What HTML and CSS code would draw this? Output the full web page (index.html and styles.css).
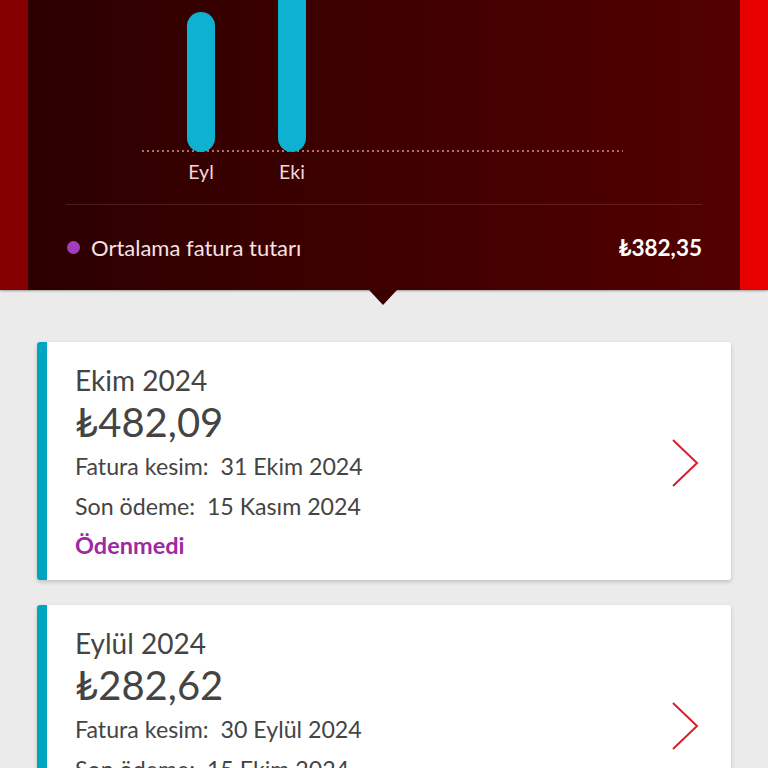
FILE: index.html
```html
<!DOCTYPE html>
<html lang="tr">
<head>
<meta charset="utf-8">
<link rel="stylesheet" href="styles.css">
</head>
<body>
<header class="header">
  <div class="strip strip-left"></div>
  <div class="panel">
    <div class="chart">
      <div class="plot">
        <div class="bar" style="height:140px"></div>
        <div class="bar" style="height:200px"></div>
      </div>
      <div class="labels">
        <span class="label">Eyl</span>
        <span class="label">Eki</span>
      </div>
    </div>
    <div class="summary">
      <span class="dot"></span>
      <span class="summary-text">Ortalama fatura tutarı</span>
      <span class="summary-value">₺382,35</span>
    </div>
  </div>
  <div class="strip strip-right"></div>
</header>

<main class="list">
  <article class="card">
    <div class="card-body">
      <div class="card-title">Ekim 2024</div>
      <div class="card-amount">₺482,09</div>
      <div class="card-line">Fatura kesim:&nbsp; 31 Ekim 2024</div>
      <div class="card-line">Son ödeme:&nbsp; 15 Kasım 2024</div>
      <div class="card-status">Ödenmedi</div>
    </div>
    <svg class="chev" width="28" height="50" viewBox="0 0 28 50"><polyline points="2,2 26,25 2,48" fill="none" stroke="#d5202e" stroke-width="2"/></svg>
  </article>
  <article class="card">
    <div class="card-body">
      <div class="card-title">Eylül 2024</div>
      <div class="card-amount">₺282,62</div>
      <div class="card-line">Fatura kesim:&nbsp; 30 Eylül 2024</div>
      <div class="card-line">Son ödeme:&nbsp; 15 Ekim 2024</div>
      <div class="card-status">Ödendi</div>
    </div>
    <svg class="chev" width="28" height="50" viewBox="0 0 28 50"><polyline points="2,2 26,25 2,48" fill="none" stroke="#d5202e" stroke-width="2"/></svg>
  </article>
</main>
</body>
</html>
```

FILE: styles.css
```css
html, body {
  margin: 0;
  padding: 0;
  background: #ebebeb;
  font-family: "Lato", "Liberation Sans", sans-serif;
  overflow: hidden;
  height: 768px;
}

.header {
  position: relative;
  display: flex;
  height: 290px;
  box-shadow: 0 1px 2px rgba(0,0,0,0.35);
}

.header::after {
  content: "";
  position: absolute;
  left: 369px;
  top: 290px;
  border-left: 14px solid transparent;
  border-right: 14px solid transparent;
  border-top: 15px solid #3a0000;
}

.strip {
  width: 28px;
  flex: none;
}
.strip-left { background: #850000; }
.strip-right { background: #e60000; }

.panel {
  flex: 1;
  background: linear-gradient(to right, #2c0000, #520000);
  padding: 0 38px;
  display: flex;
  flex-direction: column;
}

.chart {
  height: 205px;
  border-bottom: 1px solid rgba(255, 200, 200, 0.14);
  box-sizing: border-box;
}

.plot {
  margin-left: 76px;
  width: 481px;
  height: 152px;
  box-sizing: border-box;
  padding-left: 45px;
  display: flex;
  align-items: flex-end;
  gap: 63px;
  overflow: hidden;
  background: linear-gradient(to right, #b86a6a 50%, transparent 50%) left bottom / 5px 2px repeat-x;
}

.bar {
  width: 28px;
  background: #0fb1d1;
  border-radius: 14px;
}

.labels {
  margin-left: 76px;
  padding-left: 45px;
  display: flex;
  gap: 63px;
  padding-top: 9px;
}

.label {
  width: 28px;
  color: #f2d8d8;
  font-size: 19.5px;
  line-height: 22px;
  white-space: nowrap;
  display: flex;
  justify-content: center;
}

.summary {
  flex: 1;
  display: flex;
  align-items: center;
  color: #f6e2e2;
  font-size: 22px;
  padding-bottom: 1px;
}

.dot {
  width: 13px;
  height: 13px;
  border-radius: 50%;
  background: #a23dbd;
  margin-left: 1px;
  margin-right: 11px;
}

.summary-text { flex: 1; }

.summary-value {
  font-weight: 700;
  color: #ffffff;
  font-size: 22.5px;
}

.list {
  padding: 52px 37px 0;
  display: flex;
  flex-direction: column;
  gap: 25px;
}

.card {
  background: #ffffff;
  border-left: 10px solid #00a6c0;
  border-radius: 3px;
  box-shadow: 0 2px 4px rgba(0,0,0,0.18);
  display: flex;
  align-items: center;
  padding: 19px 32px 16px 28px;
  color: #444444;
}

.card-body { flex: 1; }

.card-title {
  font-size: 28px;
  line-height: 38px;
}

.card-amount {
  font-size: 40px;
  line-height: 47px;
}

.card-line {
  font-size: 23.2px;
  line-height: 40px;
}

.card-status {
  font-size: 23.5px;
  line-height: 38px;
  font-weight: 700;
  color: #9c2aa0;
}

.chev { flex: none; }
```
